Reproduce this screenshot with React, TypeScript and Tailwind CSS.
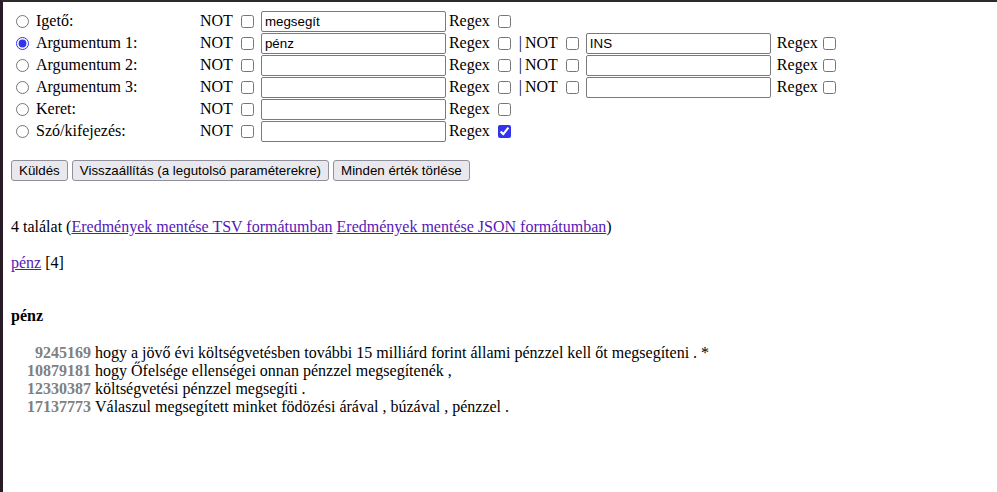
import React from "react";

const serif = { fontFamily: '"Liberation Serif", "Times New Roman", serif' };

function Check({ checked = false, className = "" }: { checked?: boolean; className?: string }) {
  return (
    <input
      type="checkbox"
      defaultChecked={checked}
      className={"m-0 size-[13px] shrink-0 accent-[#3333ee] " + className}
    />
  );
}

function TextBox({ value = "", className = "" }: { value?: string; className?: string }) {
  return (
    <input
      type="text"
      defaultValue={value}
      className={
        "h-[21px] w-[185px] shrink-0 rounded-[2px] border border-[#7a7a7a] bg-white px-[3px] text-[13.33px] text-black outline-none [font-family:'Liberation_Sans',Arial,sans-serif] " +
        className
      }
    />
  );
}

type Row = { label: string; value?: string; second?: boolean; value2?: string; radio?: boolean; regex?: boolean };

const rows: Row[] = [
  { label: "Igető:", value: "megsegít" },
  { label: "Argumentum 1:", value: "pénz", second: true, value2: "INS", radio: true },
  { label: "Argumentum 2:", second: true },
  { label: "Argumentum 3:", second: true },
  { label: "Keret:" },
  { label: "Szó/kifejezés:", regex: true },
];

const results = [
  ["9245169", "hogy a jövő évi költségvetésben további 15 milliárd forint állami pénzzel kell őt megsegíteni . *"],
  ["10879181", "hogy Őfelsége ellenségei onnan pénzzel megsegítenék ,"],
  ["12330387", "költségvetési pénzzel megsegíti ."],
  ["17137773", "Válaszul megsegített minket födözési árával , búzával , pénzzel ."],
];

function Btn({ children }: { children: React.ReactNode }) {
  return (
    <button className="h-[21px] rounded-[3px] border border-[#8f8f9d] bg-[#e9e9ed] px-[7px] text-[13.33px] leading-none text-black [font-family:'Liberation_Sans',Arial,sans-serif]">
      {children}
    </button>
  );
}

export default function App() {
  return (
    <div
      style={serif}
      className="min-h-[492px] border-l-[3px] border-t-2 border-l-[#2a1c27] border-t-[#2b2b2b] bg-white text-[16px] leading-[normal] text-black"
    >
      <div className="px-[8px] pt-[8px]">
        <div className="flex flex-col">
          {rows.map((r, i) => (
            <div key={i} className="flex h-[22px] items-center">
              <div className="flex w-[189px] shrink-0 items-center">
                <input
                  type="radio"
                  name="mode"
                  defaultChecked={!!r.radio}
                  className="m-0 ml-[5px] size-[13px] accent-[#3333ee]"
                />
                <span className="ml-[7px]">{r.label}</span>
              </div>
              <span>NOT</span>
              <Check className="ml-[8px]" />
              <TextBox value={r.value} className="ml-[7px]" />
              <span className="ml-[3px]">Regex</span>
              <Check checked={!!r.regex} className="ml-[8px]" />
              {r.second && (
                <>
                  <span className="ml-[8px]">|</span>
                  <span className="ml-[3px]">NOT</span>
                  <Check className="ml-[8px]" />
                  <TextBox value={r.value2} className="ml-[7px]" />
                  <span className="ml-[6px]">Regex</span>
                  <Check className="ml-[5px]" />
                </>
              )}
            </div>
          ))}
        </div>

        <div className="mt-[18px] flex gap-[4px]">
          <Btn>Küldés</Btn>
          <Btn>Visszaállítás (a legutolsó paraméterekre)</Btn>
          <Btn>Minden érték törlése</Btn>
        </div>

        <p className="mt-[37px]">
          4 találat (
          <a href="#" className="text-[#5518b8] underline">
            Eredmények mentése TSV formátumban
          </a>{" "}
          <a href="#" className="text-[#5518b8] underline">
            Eredmények mentése JSON formátumban
          </a>
          )
        </p>

        <p className="mt-[18px]">
          <a href="#" className="text-[#5518b8] underline">
            pénz
          </a>{" "}
          [4]
        </p>

        <p className="mt-[35px] font-bold">pénz</p>

        <div className="mt-[19px] flex flex-col">
          {results.map(([n, t]) => (
            <div key={n} className="flex">
              <span className="w-[80px] shrink-0 text-right font-bold text-[#808080]">{n}</span>
              <span className="ml-[4px]">{t}</span>
            </div>
          ))}
        </div>
      </div>
    </div>
  );
}
